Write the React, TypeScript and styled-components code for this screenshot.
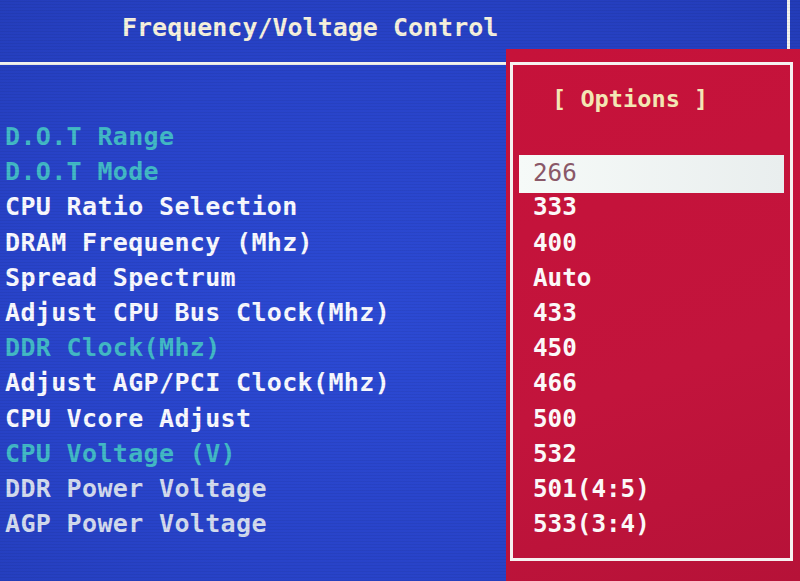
import styled, { createGlobalStyle } from 'styled-components';

const GlobalStyle = createGlobalStyle`
  html, body {
    margin: 0;
    padding: 0;
  }

  body {
    width: 800px;
    height: 581px;
    overflow: hidden;
    background: #2843c9;
  }
`;

type Tone = 'white' | 'cyan' | 'grey';

const items: { label: string; tone: Tone }[] = [
  { label: 'D.O.T Range', tone: 'cyan' },
  { label: 'D.O.T Mode', tone: 'cyan' },
  { label: 'CPU Ratio Selection', tone: 'white' },
  { label: 'DRAM Frequency (Mhz)', tone: 'white' },
  { label: 'Spread Spectrum', tone: 'white' },
  { label: 'Adjust CPU Bus Clock(Mhz)', tone: 'white' },
  { label: 'DDR Clock(Mhz)', tone: 'cyan' },
  { label: 'Adjust AGP/PCI Clock(Mhz)', tone: 'white' },
  { label: 'CPU Vcore Adjust', tone: 'white' },
  { label: 'CPU Voltage (V)', tone: 'cyan' },
  { label: 'DDR Power Voltage', tone: 'grey' },
  { label: 'AGP Power Voltage', tone: 'grey' },
];

const options = ['266', '333', '400', 'Auto', '433', '450', '466', '500', '532', '501(4:5)', '533(3:4)'];

const toneColors: Record<Tone, string> = {
  white: '#f8f9ff',
  cyan: '#42b9c6',
  grey: '#d3dbee',
};

export default function App() {
  return (
    <>
      <GlobalStyle />
      <Screen>
        <Frame>
          <Header>
            <Title>Frequency/Voltage Control</Title>
          </Header>
          <ItemList>
            {items.map((item) => (
              <Item key={item.label} $tone={item.tone}>
                {item.label}
              </Item>
            ))}
          </ItemList>
        </Frame>
        <Popup>
          <PopupBox>
            <PopupTitle>[ Options ]</PopupTitle>
            <OptionList>
              {options.map((value, i) => (
                <Option key={value} $selected={i === 0}>
                  {value}
                </Option>
              ))}
            </OptionList>
          </PopupBox>
        </Popup>
      </Screen>
    </>
  );
}

const Screen = styled.div`
  position: relative;
  width: 800px;
  height: 581px;
  overflow: hidden;
  background: radial-gradient(ellipse at 45% 55%, #2c4ad4 0%, #2843c9 55%, #233cb8 100%);
  font-family: 'DejaVu Sans Mono', 'Liberation Mono', monospace;

  &::after {
    content: '';
    position: absolute;
    inset: 0;
    pointer-events: none;
    background: repeating-linear-gradient(0deg, rgba(0, 0, 0, 0.05) 0 1px, transparent 1px 3px);
  }
`;

const Frame = styled.div`
  box-sizing: border-box;
  width: 790px;
  height: 100%;
  border-right: 3px solid #f2f2ee;
`;

const Header = styled.header`
  box-sizing: border-box;
  height: 65px;
  padding: 10px 0 0 122px;
  border-bottom: 3px solid #f2f2ee;
`;

const Title = styled.h1`
  margin: 0;
  font-size: 25px;
  font-weight: bold;
  line-height: 35.2px;
  color: #f6f1de;
  white-space: nowrap;
`;

const ItemList = styled.ul`
  margin: 0;
  padding: 54px 0 0 5px;
  list-style: none;
`;

const Item = styled.li<{ $tone: Tone }>`
  font-size: 25px;
  font-weight: bold;
  line-height: 35.2px;
  letter-spacing: 0.35px;
  white-space: nowrap;
  color: ${({ $tone }) => toneColors[$tone]};
`;

const Popup = styled.div`
  position: absolute;
  left: 506px;
  top: 49px;
  right: 0;
  bottom: 0;
  z-index: 1;
  display: flex;
  box-sizing: border-box;
  padding: 13px 7px 20px 4px;
  background: linear-gradient(160deg, #c6123a 0%, #c2143c 60%, #b61238 100%);
`;

const PopupBox = styled.div`
  flex: 1;
  padding: 14px 6px 0;
  border: 3px solid #f6f0f0;
`;

const PopupTitle = styled.div`
  padding: 3px 0 0 33px;
  font-size: 23.6px;
  font-weight: bold;
  line-height: 35.2px;
  color: #f3e6b4;
  white-space: nowrap;
`;

const OptionList = styled.ul`
  margin: 38px 0 0;
  padding: 0;
  list-style: none;
`;

const Option = styled.li<{ $selected?: boolean }>`
  padding-left: 14px;
  font-size: 24.25px;
  font-weight: ${({ $selected }) => ($selected ? 'normal' : 'bold')};
  line-height: 35.2px;
  white-space: nowrap;
  color: ${({ $selected }) => ($selected ? '#8a5868' : '#fbf8f8')};
  background: ${({ $selected }) => ($selected ? 'linear-gradient(90deg, #f6faf8, #e9eeee)' : 'transparent')};
  margin-top: ${({ $selected }) => ($selected ? '1px' : '0')};
  padding-bottom: ${({ $selected }) => ($selected ? '3px' : '0')};
  margin-bottom: ${({ $selected }) => ($selected ? '-4px' : '0')};
`;
